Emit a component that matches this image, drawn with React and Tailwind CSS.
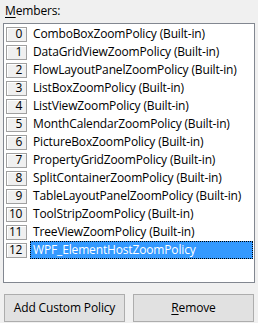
import React, { useState } from 'react';

const members = [
    'ComboBoxZoomPolicy (Built-in)',
    'DataGridViewZoomPolicy (Built-in)',
    'FlowLayoutPanelZoomPolicy (Built-in)',
    'ListBoxZoomPolicy (Built-in)',
    'ListViewZoomPolicy (Built-in)',
    'MonthCalendarZoomPolicy (Built-in)',
    'PictureBoxZoomPolicy (Built-in)',
    'PropertyGridZoomPolicy (Built-in)',
    'SplitContainerZoomPolicy (Built-in)',
    'TableLayoutPanelZoomPolicy (Built-in)',
    'ToolStripZoomPolicy (Built-in)',
    'TreeViewZoomPolicy (Built-in)',
    'WPF_ElementHostZoomPolicy',
];

const App = () => {
    const [selected, setSelected] = useState(12);

    return (
        <div
            className="w-[258px] h-[323px] bg-[#f0f0f0] text-[12px] text-black overflow-hidden"
            style={{ fontFamily: '"Open Sans", "Noto Sans", sans-serif' }}
        >
            <div className="pl-[5px] pt-[3px] h-[20px] leading-[16px] tracking-[-0.15px]">
                <span className="underline underline-offset-2">M</span>embers:
            </div>

            <div className="ml-[3px] mt-[3px] w-[252px] h-[260px] border border-[#828790] bg-white pt-[1px]">
                {members.map((name, i) => (
                    <div
                        key={i}
                        onClick={() => setSelected(i)}
                        className="flex items-center h-[18px]"
                    >
                        <div className="ml-[2px] w-[21px] h-[15px] border border-[#a0a0a0] bg-[#f0f0f0] shadow-[inset_1px_1px_0_#ffffff] flex items-center justify-end pr-[4px] leading-none tracking-[-0.3px]">
                            {i}
                        </div>
                        <div
                            className={
                                i === selected
                                    ? 'ml-[3px] flex-1 mr-[1px] h-[18px] leading-[16px] pl-[2px] tracking-[-0.15px] bg-[#3399ff] text-white border border-dotted border-black'
                                    : 'ml-[3px] flex-1 mr-[1px] h-[18px] leading-[16px] pl-[2px] tracking-[-0.15px] border border-transparent'
                            }
                        >
                            {name}
                        </div>
                    </div>
                ))}
            </div>

            <div className="flex gap-[8px] ml-[4px] mt-[11px] tracking-[-0.15px]">
                <button className="w-[121px] h-[28px] border border-[#adadad] bg-[#e1e1e1]">
                    Add Custom Policy
                </button>
                <button className="w-[121px] h-[28px] border border-[#adadad] bg-[#e1e1e1]">
                    <span className="underline underline-offset-2">R</span>emove
                </button>
            </div>
        </div>
    );
};

export default App;
